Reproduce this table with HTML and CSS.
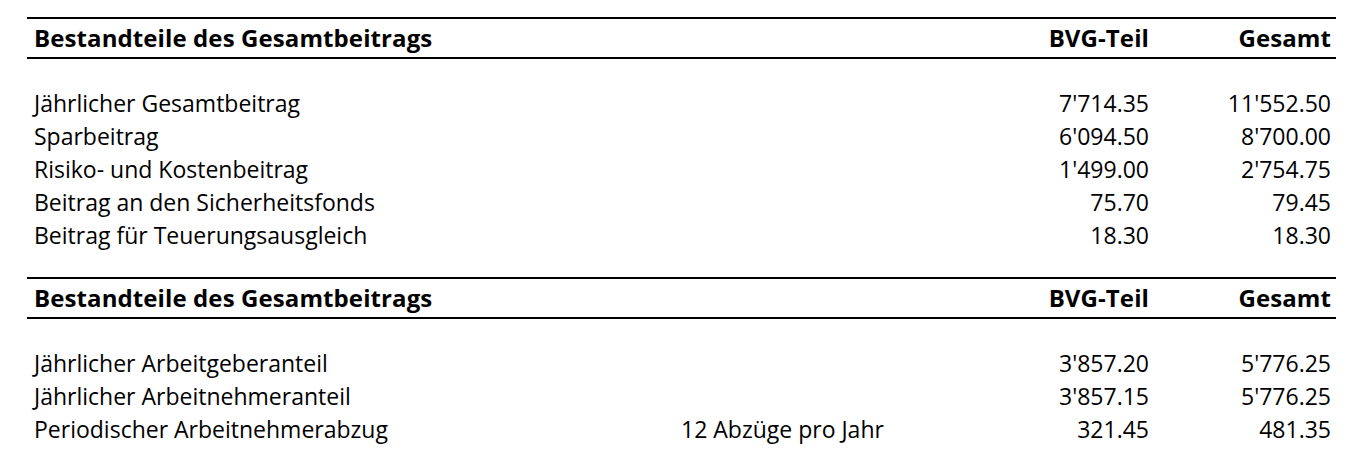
FILE: index.html
```html
<!DOCTYPE html>
<html lang="de">
<head>
<meta charset="utf-8">
<title>Bestandteile des Gesamtbeitrags</title>
<link rel="stylesheet" href="styles.css">
</head>
<body>
<main class="page">
  <section class="tbl">
    <div class="row head">
      <div class="c label">Bestandteile des Gesamtbeitrags</div>
      <div class="c note"></div>
      <div class="c num">BVG-Teil</div>
      <div class="c num">Gesamt</div>
    </div>
    <div class="body">
      <div class="row"><div class="c label">Jährlicher Gesamtbeitrag</div><div class="c note"></div><div class="c num">7'714.35</div><div class="c num">11'552.50</div></div>
      <div class="row"><div class="c label">Sparbeitrag</div><div class="c note"></div><div class="c num">6'094.50</div><div class="c num">8'700.00</div></div>
      <div class="row"><div class="c label">Risiko- und Kostenbeitrag</div><div class="c note"></div><div class="c num">1'499.00</div><div class="c num">2'754.75</div></div>
      <div class="row"><div class="c label">Beitrag an den Sicherheitsfonds</div><div class="c note"></div><div class="c num">75.70</div><div class="c num">79.45</div></div>
      <div class="row"><div class="c label">Beitrag für Teuerungsausgleich</div><div class="c note"></div><div class="c num">18.30</div><div class="c num">18.30</div></div>
    </div>
  </section>
  <section class="tbl">
    <div class="row head">
      <div class="c label">Bestandteile des Gesamtbeitrags</div>
      <div class="c note"></div>
      <div class="c num">BVG-Teil</div>
      <div class="c num">Gesamt</div>
    </div>
    <div class="body">
      <div class="row"><div class="c label">Jährlicher Arbeitgeberanteil</div><div class="c note"></div><div class="c num">3'857.20</div><div class="c num">5'776.25</div></div>
      <div class="row"><div class="c label">Jährlicher Arbeitnehmeranteil</div><div class="c note"></div><div class="c num">3'857.15</div><div class="c num">5'776.25</div></div>
      <div class="row"><div class="c label">Periodischer Arbeitnehmerabzug</div><div class="c note">12 Abzüge pro Jahr</div><div class="c num">321.45</div><div class="c num">481.35</div></div>
    </div>
  </section>
</main>
</body>
</html>
```

FILE: styles.css
```css
html, body {
  margin: 0;
  padding: 0;
  background: #ffffff;
}
body {
  font-family: "Open Sans", Lato, "Liberation Sans", sans-serif;
  color: #000000;
}
.page {
  padding: 17px 24px 0 27px;
  display: flex;
  flex-direction: column;
  gap: 25px;
}
.tbl {
  display: flex;
  flex-direction: column;
}
.row {
  display: grid;
  grid-template-columns: 654px 268px 200px 182px;
  padding-right: 5px;
  align-items: center;
}
.head {
  border-top: 2px solid #000;
  border-bottom: 2px solid #000;
  height: 38px;
  font-weight: 700;
  font-size: 24px;
  letter-spacing: 0.1px;
}
.body {
  padding-top: 28px;
  display: flex;
  flex-direction: column;
}
.body .row {
  height: 33px;
  font-size: 23px;
}
.c {
  white-space: nowrap;
  line-height: 1;
}
.label {
  padding-left: 7px;
}
.num {
  text-align: right;
}
```
